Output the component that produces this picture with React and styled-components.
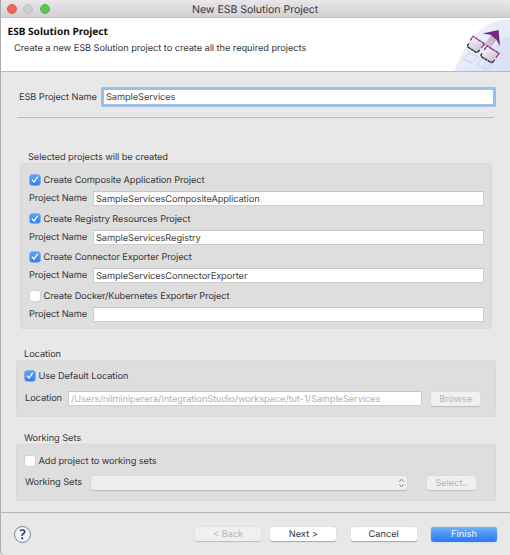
import React from "react";
import styled, { createGlobalStyle } from "styled-components";

const Global = createGlobalStyle`
  * { box-sizing: border-box; }
  body { margin: 0; background: #e8e8e8; }
`;

const Dialog = styled.main`
  width: 510px;
  height: 555px;
  display: flex;
  flex-direction: column;
  background: #e8e8e8;
  box-shadow: inset 1px 0 #adadad;
  border-bottom-left-radius: 4px;
  font: 9.25px/12px Inter, "Liberation Sans", sans-serif;
  text-rendering: geometricPrecision;
  color: #353535;
  white-space: nowrap;
  overflow: hidden;
`;

const TitleBar = styled.header`
  height: 18px;
  flex: none;
  display: grid;
  grid-template-columns: 191px 1fr;
  align-items: center;
  border-bottom: 1px solid #c2c0c2;
  border-left: 1px solid #aaa;
  background: linear-gradient(#e9e7e9, #d2d0d2);
`;

const Lights = styled.div`
  display: flex;
  gap: 6.4px;
  padding-left: 6px;
`;

const Light = styled.i`
  width: 10px;
  height: 10px;
  border-radius: 50%;
  background: ${(p) => p.$color};
  border: 0.5px solid ${(p) => p.$edge};
`;

const Title = styled.h1`
  margin: 2px 0 0;
  font-size: 10.6px;
  font-weight: 400;
  line-height: 14px;
  letter-spacing: -0.05px;
  color: #3d3a3d;
`;

const Banner = styled.section`
  height: 54px;
  flex: none;
  display: flex;
  justify-content: space-between;
  background: #fff;
  border-bottom: 1px solid #b9bbba;
  border-left: 1px solid #aaa;
`;

const BannerText = styled.div`
  padding: 6px 0 0 6.5px;
`;

const Heading = styled.h2`
  margin: 0;
  font: 700 10.1px/14px "Noto Sans", "Open Sans", sans-serif;
  color: #111;
`;

const Text = styled.span`
  letter-spacing: ${(p) => p.$track ?? -0.08}px;
`;

const Description = styled(Text)`
  display: block;
  margin: 5px 0 0 6.5px;
`;

const Art = styled.svg`
  width: 60px;
  height: 53px;
  display: block;
`;

const NameRow = styled.div`
  height: 46px;
  flex: none;
  margin: 0 16px 0 17px;
  padding: 15px 0 0 2px;
  display: flex;
  border-bottom: 1px solid #bbb;
`;

const NameLabel = styled(Text)`
  width: 84px;
  padding-top: 5px;
`;

const Field = styled.div`
  flex: ${(p) => (p.$w ? "none" : 1)};
  width: ${(p) => (p.$w ? p.$w + "px" : "auto")};
  height: 15px;
  padding-left: 2px;
  line-height: 16px;
  background: #fff;
  border: 1px solid #cecece;
  border-top-color: #c6c6c6;
  color: ${(p) => (p.$disabled ? "#b2b2b2" : "#404040")};
`;

const FocusField = styled(Field)`
  height: 16px;
  margin-top: 2px;
  line-height: 16px;
  border-color: #a9bcd8;
  box-shadow: 0 0 0 2px #98beef;
  border-radius: 0.5px;
`;

const Caption = styled(Text)`
  display: block;
  flex: none;
  height: 12px;
  padding-top: 1px;
  margin: ${(p) => p.$margin};
`;

const Group = styled.section`
  flex: none;
  height: ${(p) => p.$h}px;
  margin: ${(p) => p.$margin};
  padding: ${(p) => p.$pad};
  background: #dedede;
  border: 1px solid #d9d9d9;
  border-radius: 3px;
`;

const CheckRow = styled.div`
  height: 12px;
  display: flex;
  align-items: center;
  gap: 4px;
`;

const CheckLabel = styled(Text)`
  padding-top: 2px;
`;

const Box = styled.span`
  width: 9.5px;
  height: 9.5px;
  flex: none;
  border-radius: 2px;
  background: ${(p) => (p.$on ? "linear-gradient(#5ba4f9, #317df6)" : "#fff")};
  box-shadow: 0 0 0 0.5px ${(p) => (p.$on ? "#3d80e0" : "#c4c4c4")};

  svg { display: block; width: 9.5px; height: 9.5px; }
`;

const FormRow = styled.div`
  display: flex;
  align-items: center;
  height: 15px;
  margin-top: ${(p) => p.$top}px;
`;

const FormLabel = styled(Text)`
  width: ${(p) => p.$w}px;
  padding-top: 1px;
  flex: none;
`;

const ProjectItem = styled.div`
  height: 38.6px;

  ${FormRow} { margin-left: -1px; }
`;

const Button = styled.button`
  width: ${(p) => p.$w}px;
  height: 14px;
  flex: none;
  margin: 0 0 0 ${(p) => p.$left || 0}px;
  padding: 2px 0 0;
  border: 0;
  border-radius: 2.5px;
  font: inherit;
  line-height: 12px;
  letter-spacing: 0;
  text-align: center;
  text-rendering: inherit;
  color: ${(p) => (p.$primary ? "#f2f7ff" : p.$disabled ? "#b4b4b4" : "#333")};
  background: ${(p) =>
    p.$primary ? "linear-gradient(#6eb0f9, #2b7bf6)" : p.$disabled ? "#f0f0f0" : "#fff"};
  box-shadow: 0 0.5px 1px ${(p) => (p.$primary ? "#3670c8" : p.$disabled ? "#bcbcbc" : "#a5a5a5")};
`;

const Combo = styled.div`
  width: 316px;
  height: 14px;
  display: flex;
  justify-content: flex-end;
  align-items: center;
  padding-right: 2px;
  border-radius: 2.5px;
  background: #eee;
  box-shadow: 0 0.5px 1px #bababa;
`;

const Footer = styled.footer`
  flex: none;
  height: 42px;
  margin-top: 11px;
  padding: 0 13px 0 14px;
  border-top: 1px solid #b5b5b5;
  display: flex;
  align-items: center;
`;

const Help = styled.span`
  width: 17px;
  height: 17px;
  margin-top: 1px;
  border: 1px solid #7484a0;
  border-radius: 50%;
  background: #f0f2f4;
  font: 600 13.5px/15px "Open Sans", sans-serif;
  text-align: center;
  color: #152f5e;
`;

const Actions = styled.div`
  display: flex;
  margin-left: auto;
`;

function Checkbox({ on, label }) {
  return (
    <CheckRow>
      <Box $on={on} role="checkbox" aria-checked={!!on}>
        {on && (
          <svg viewBox="0 0 10 10">
            <path d="M2.4 5.3 4.2 7.5 7.7 2.4" fill="none" stroke="#fff" strokeWidth="1.4" strokeLinecap="round" strokeLinejoin="round" />
          </svg>
        )}
      </Box>
      <CheckLabel>{label}</CheckLabel>
    </CheckRow>
  );
}

function BannerArt() {
  return (
    <Art viewBox="0 0 60 53">
      <defs>
        <linearGradient id="sky" x1="0" y1="0" x2="1" y2="1">
          <stop offset="0" stopColor="#eff2fb" />
          <stop offset="1" stopColor="#dde5f5" />
        </linearGradient>
        <linearGradient id="tile" x1="0" y1="0" x2="0.5" y2="1">
          <stop offset="0.1" stopColor="#fbf9fb" />
          <stop offset="1" stopColor="#cdc0d0" />
        </linearGradient>
        <linearGradient id="shaft" x1="1" y1="0" x2="0" y2="1">
          <stop offset="0" stopColor="#b79dbc" />
          <stop offset="1" stopColor="#ddd2e0" />
        </linearGradient>
      </defs>
      <path d="M4 53C13 32 26 2 60 1V53Z" fill="url(#sky)" />
      <path d="M31 53C36 37 45 22 60 19V53Z" fill="#d5def1" opacity=".7" />
      <path d="M18.5 35.5 28.5 38.5 22 45 13 41ZM32.5 40.5 43.5 44.5 36.5 50.5 27 46.5Z" fill="none" stroke="#d5cbef" />
      <path d="M33.5 27 43 15.5 48 19.5 40 31Z" fill="url(#shaft)" />
      <path d="M32.5 15.5 48.6 12.1 49.9 28 46.3 21.4 40.5 16.8Z" fill="#752780" />
      <path d="M23 18.3 34.5 25.7 28.5 33.5 26 34.5 17.8 28.8 18 26.5Z" fill="url(#tile)" />
      <path d="M37 27.8 49 35.3 43 43.8 41.3 44.5 31.4 38.6 31.4 36.2Z" fill="url(#tile)" />
      <g fill="none" strokeWidth="1.3" strokeDasharray="3.2 .5">
        <path d="M20.3 22.3 23 18.3 34.5 25.7 31.3 30M34.3 31.8 37 27.8 49 35.3 46 39.7" stroke="#7b2b89" />
        <path d="M18.7 25.5 17.6 27.8 18.2 29.3 26 34.3 28 34 29.6 32M32 35.3 30.9 37.2 31.6 38.9 41 44.5 43 44 44.6 41.7" stroke="#29222d" />
      </g>
    </Art>
  );
}

const projects = [
  { on: true, label: "Create Composite Application Project", value: "SampleServicesCompositeApplication" },
  { on: true, label: "Create Registry Resources Project", value: "SampleServicesRegistry" },
  { on: true, label: "Create Connector Exporter Project", value: "SampleServicesConnectorExporter" },
  { on: false, label: "Create Docker/Kubernetes Exporter Project", value: "" },
];

export default function App() {
  return (
    <>
      <Global />
      <Dialog>
        <TitleBar>
          <Lights>
            <Light $color="#f1655b" $edge="#d95850" />
            <Light $color="#d0ced0" $edge="#bebcbe" />
            <Light $color="#5ac551" $edge="#4eb547" />
          </Lights>
          <Title>New ESB Solution Project</Title>
        </TitleBar>
        <Banner>
          <BannerText>
            <Heading>ESB Solution Project</Heading>
            <Description $track={-0.055}>Create a new ESB Solution project to create all the required projects</Description>
          </BannerText>
          <BannerArt />
        </Banner>
        <NameRow>
          <NameLabel>ESB Project Name</NameLabel>
          <FocusField><Text>SampleServices</Text></FocusField>
        </NameRow>
        <Caption $margin="33px 0 0 28px">Selected projects will be created</Caption>
        <Group $h={166} $margin="0 18px 0 20px" $pad="10px 7px 0 9px">
          {projects.map((p) => (
            <ProjectItem key={p.label}>
              <Checkbox on={p.on} label={p.label} />
              <FormRow $top={5}>
                <FormLabel $w={64}>Project Name</FormLabel>
                <Field><Text>{p.value}</Text></Field>
              </FormRow>
            </ProjectItem>
          ))}
        </Group>
        <Caption $margin="19px 0 0 24px">Location</Caption>
        <Group $h={57} $margin="0 14px 0 16px" $pad="9px 0 0 8px">
          <Checkbox on label="Use Default Location" />
          <FormRow $top={9}>
            <FormLabel $w={43}>Location</FormLabel>
            <Field $w={354} $disabled>
              <Text>/Users/nilminiperera/IntegrationStudio/workspace/tut-1/SampleServices</Text>
            </Field>
            <Button $w={49} $left={9} $disabled>Browse</Button>
          </FormRow>
        </Group>
        <Caption $margin="15px 0 0 24px">Working Sets</Caption>
        <Group $h={57} $margin="0 14px 0 16px" $pad="10px 0 0 8px">
          <Checkbox label="Add project to working sets" />
          <FormRow $top={8}>
            <FormLabel $w={66}>Working Sets</FormLabel>
            <Combo>
              <svg width="7" height="10" viewBox="0 0 7 10" fill="none" stroke="#777" strokeWidth="1">
                <path d="M1.3 3.6 3.5 1.3 5.7 3.6M1.3 6.4 3.5 8.7 5.7 6.4" />
              </svg>
            </Combo>
            <Button $w={49} $left={20} $disabled>Select..</Button>
          </FormRow>
        </Group>
        <Footer>
          <Help>?</Help>
          <Actions>
            <Button $w={66} $disabled>&lt; Back</Button>
            <Button $w={66} $left={9.3}>Next &gt;</Button>
            <Button $w={66} $left={14.3}>Cancel</Button>
            <Button $w={66} $left={14.3} $primary>Finish</Button>
          </Actions>
        </Footer>
      </Dialog>
    </>
  );
}
